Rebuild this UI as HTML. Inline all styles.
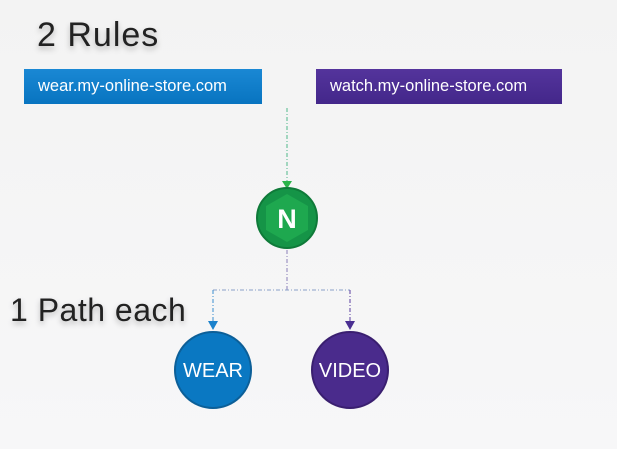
<!DOCTYPE html>
<html><head><style>
body{margin:0;width:617px;height:449px;overflow:hidden;background:linear-gradient(180deg,#f3f3f3,#f7f7f8);font-family:"Liberation Sans","DejaVu Sans",sans-serif;position:relative}
.t{position:absolute;color:#222;text-shadow:0 3px 6px rgba(0,0,0,.25)}
.box{position:absolute;height:35px;color:#fff;font-size:16.5px;line-height:35px;padding-left:14px;box-sizing:border-box}
</style></head><body>
<div class="t" style="left:37px;top:16px;font-size:34px;letter-spacing:1px">2 Rules</div>
<div class="t" style="left:10px;top:292px;font-size:32px;letter-spacing:.5px">1 Path each</div>
<div class="box" style="left:24px;top:69px;width:238px;background:linear-gradient(#1a88d4,#0874c0)">wear.my-online-store.com</div>
<div class="box" style="left:316px;top:69px;width:246px;background:linear-gradient(#54349c,#43278a)">watch.my-online-store.com</div>
<svg width="617" height="449" style="position:absolute;left:0;top:0">
<g fill="none" stroke-width="1" stroke-dasharray="4,2,1,2">
<line x1="287" y1="108" x2="287" y2="182" stroke="#4fb88a"/>
<line x1="287" y1="250" x2="287" y2="290" stroke="#8a7fb8"/>
<line x1="213" y1="290" x2="350" y2="290" stroke="#8aa0c8"/>
<line x1="213" y1="290" x2="213" y2="322" stroke="#3a8ed0"/>
<line x1="350" y1="290" x2="350" y2="322" stroke="#5a3fa0"/>
</g>
<polygon points="282,181 292,181 287,189" fill="#2bb34a"/>
<polygon points="208,321 218,321 213,330" fill="#1b82cc"/>
<polygon points="345,321 355,321 350,330" fill="#4a2f92"/>
<circle cx="287" cy="218" r="30" fill="#159447" stroke="#0f7a39" stroke-width="2"/>
<polygon points="287,194 308,206 308,230 287,242 266,230 266,206" fill="#1ea84f"/>
<text x="287" y="228" text-anchor="middle" font-size="27" font-weight="bold" fill="#fff" font-family="Liberation Sans">N</text>
<circle cx="213" cy="370" r="38" fill="#0a78c2" stroke="#0c5f98" stroke-width="2"/>
<text x="213" y="377" text-anchor="middle" font-size="20" fill="#fff" font-family="Liberation Sans">WEAR</text>
<circle cx="350" cy="370" r="38" fill="#4a2b8c" stroke="#3a1f70" stroke-width="2"/>
<text x="350" y="377" text-anchor="middle" font-size="20" fill="#fff" font-family="Liberation Sans">VIDEO</text>
</svg>
</body></html>
